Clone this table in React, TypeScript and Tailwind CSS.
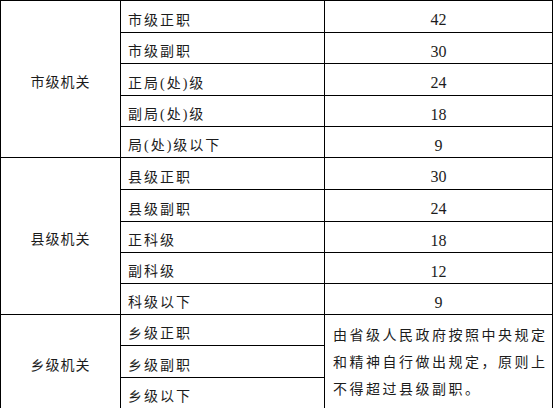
import React from "react";

type Row = { post: string; value?: string };

const groups: { name: string; span: string; rows: Row[]; note?: string[] }[] = [
  {
    name: "市级机关",
    span: "row-span-5",
    rows: [
      { post: "市级正职", value: "42" },
      { post: "市级副职", value: "30" },
      { post: "正局(处)级", value: "24" },
      { post: "副局(处)级", value: "18" },
      { post: "局(处)级以下", value: "9" },
    ],
  },
  {
    name: "县级机关",
    span: "row-span-5",
    rows: [
      { post: "县级正职", value: "30" },
      { post: "县级副职", value: "24" },
      { post: "正科级", value: "18" },
      { post: "副科级", value: "12" },
      { post: "科级以下", value: "9" },
    ],
  },
  {
    name: "乡级机关",
    span: "row-span-3",
    rows: [{ post: "乡级正职" }, { post: "乡级副职" }, { post: "乡级以下" }],
    note: ["由省级人民政府按照中央规定", "和精神自行做出规定，原则上", "不得超过县级副职。"],
  },
];

function App() {
  return (
    <div className="w-[553px] h-[408px] overflow-hidden bg-white">
      {/* black background shows through the 1px gaps as the table rules */}
      <div className="grid grid-cols-[119px_203px_227px] grid-rows-[31px_30px_31px_30px_30px_31px_31px_30px_30px_30px_30px_31px_30px] gap-px bg-black p-px text-[#1c1c1c] font-['Liberation_Serif','Noto_Sans_CJK_SC',serif]">
        {groups.map((group) => (
          <React.Fragment key={group.name}>
            <div
              className={`${group.span} bg-white flex items-center justify-center pt-[7px] text-[14px] tracking-[1px]`}
            >
              {group.name}
            </div>
            {group.rows.map((row, i) => (
              <React.Fragment key={row.post}>
                <div className="bg-white flex items-center pl-[7px] pt-[7px] text-[14px] tracking-[2px]">
                  {row.post}
                </div>
                {row.value && (
                  <div className="bg-white flex items-center justify-center pt-[7px] text-[16px]">
                    {row.value}
                  </div>
                )}
                {i === 0 && group.note && (
                  <div className="row-span-3 bg-white flex flex-col justify-center pl-[8px] pt-[2px] text-[14px] tracking-[2.5px] leading-[27px]">
                    {group.note.map((line) => (
                      <span key={line} className="whitespace-nowrap">
                        {line}
                      </span>
                    ))}
                  </div>
                )}
              </React.Fragment>
            ))}
          </React.Fragment>
        ))}
      </div>
    </div>
  );
}

export default App;
